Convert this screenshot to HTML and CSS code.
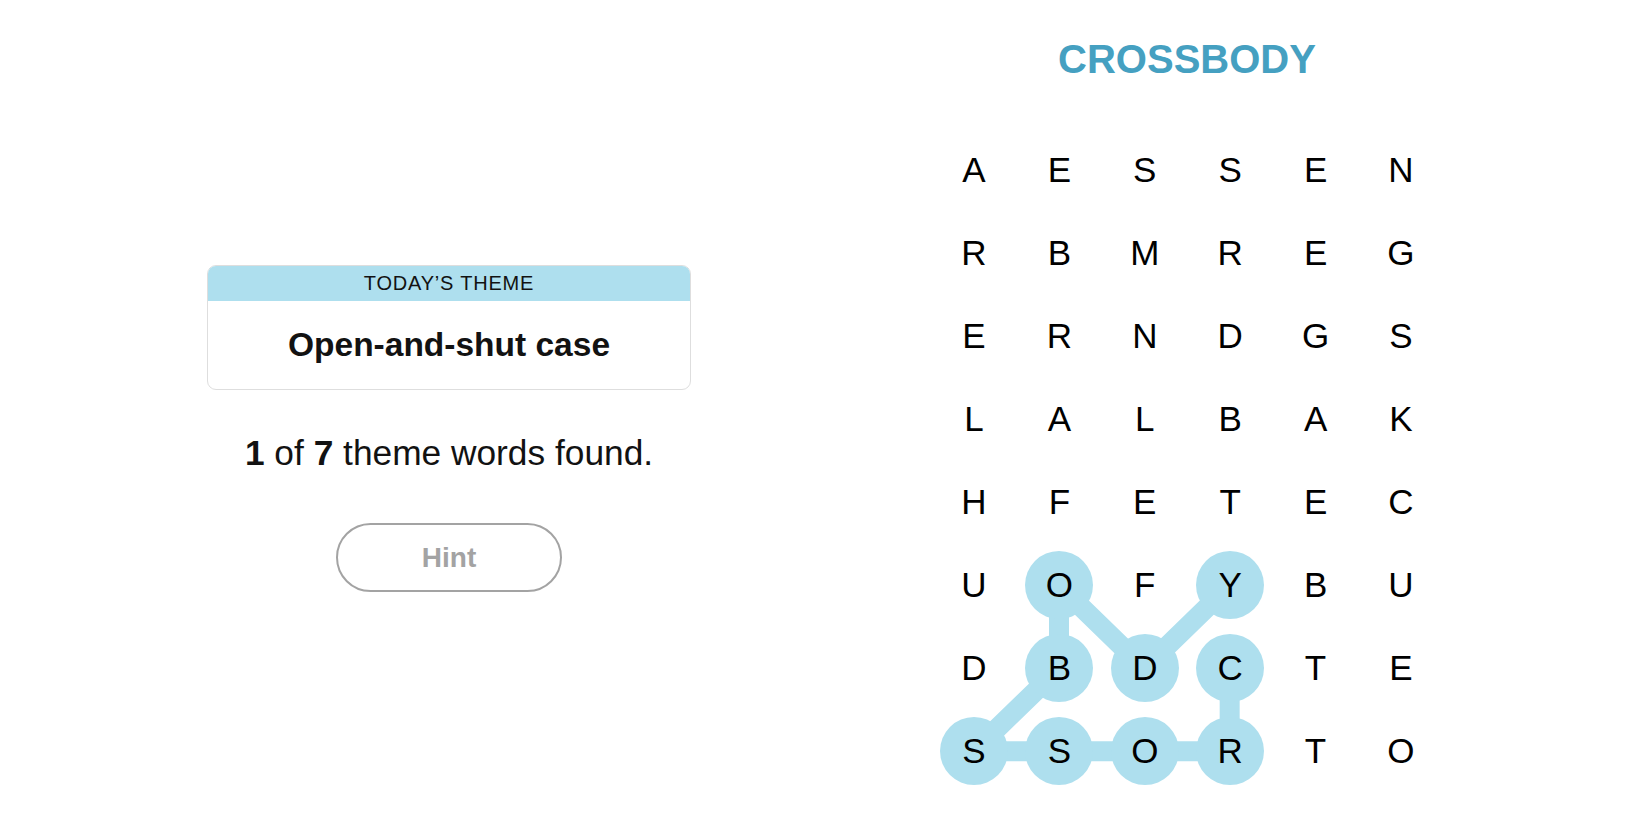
FILE: index.html
```html
<!DOCTYPE html>
<html lang="en">
<head>
<meta charset="utf-8">
<title>Strands</title>
<link rel="stylesheet" href="styles.css">
</head>
<body>
<main class="page">
  <section class="left">
    <div class="theme-card">
      <div class="theme-head">TODAY’S THEME</div>
      <div class="theme-body">Open-and-shut case</div>
    </div>
    <p class="progress"><b>1</b> of <b>7</b> theme words found.</p>
    <button class="hint" type="button">Hint</button>
  </section>
  <section class="right">
    <h1 class="word">CROSSBODY</h1>
    <div class="board">
      <svg class="links" width="512" height="664" viewBox="0 0 512.4 664" aria-hidden="true">
        <polyline points="298.9,539.5 298.9,622.5 213.5,622.5 128.1,622.5 42.7,622.5 128.1,539.5 128.1,456.5 213.5,539.5 298.9,456.5" fill="none" stroke="#aedfee" stroke-width="20" stroke-linejoin="round"/>
      </svg>
      <div class="grid">
        <span class="cell">A</span><span class="cell">E</span><span class="cell">S</span><span class="cell">S</span><span class="cell">E</span><span class="cell">N</span>
        <span class="cell">R</span><span class="cell">B</span><span class="cell">M</span><span class="cell">R</span><span class="cell">E</span><span class="cell">G</span>
        <span class="cell">E</span><span class="cell">R</span><span class="cell">N</span><span class="cell">D</span><span class="cell">G</span><span class="cell">S</span>
        <span class="cell">L</span><span class="cell">A</span><span class="cell">L</span><span class="cell">B</span><span class="cell">A</span><span class="cell">K</span>
        <span class="cell">H</span><span class="cell">F</span><span class="cell">E</span><span class="cell">T</span><span class="cell">E</span><span class="cell">C</span>
        <span class="cell">U</span><span class="cell on">O</span><span class="cell">F</span><span class="cell on">Y</span><span class="cell">B</span><span class="cell">U</span>
        <span class="cell">D</span><span class="cell on">B</span><span class="cell on">D</span><span class="cell on">C</span><span class="cell">T</span><span class="cell">E</span>
        <span class="cell on">S</span><span class="cell on">S</span><span class="cell on">O</span><span class="cell on">R</span><span class="cell">T</span><span class="cell">O</span>
      </div>
    </div>
  </section>
</main>
</body>
</html>
```

FILE: styles.css
```css
* { box-sizing: border-box; }
html, body { margin: 0; padding: 0; background: #fff; }
body {
  font-family: "Liberation Sans", Arial, sans-serif;
  color: #121212;
  width: 1650px;
  height: 825px;
  overflow: hidden;
}
.page {
  display: flex;
  align-items: flex-start;
}
.left {
  width: 898px;
  padding-top: 265px;
  display: flex;
  flex-direction: column;
  align-items: center;
}
.theme-card {
  width: 484px;
  border: 1px solid #dedede;
  border-radius: 9px;
  overflow: hidden;
}
.theme-head {
  height: 35px;
  background: #aedfee;
  display: flex;
  align-items: center;
  justify-content: center;
  font-size: 20px;
  letter-spacing: 0.8px;
  color: #121212;
}
.theme-body {
  height: 88px;
  display: flex;
  align-items: center;
  justify-content: center;
  font-size: 33.5px;
  font-weight: 700;
  color: #121212;
}
.progress {
  margin: 43px 0 0;
  font-size: 35.3px;
  line-height: 40px;
  color: #121212;
}
.progress b { font-weight: 700; }
.hint {
  margin-top: 50px;
  width: 226px;
  height: 69px;
  border: 2px solid #a3a3a3;
  border-radius: 35px;
  background: #fff;
  font-family: "Liberation Sans", Arial, sans-serif;
  font-size: 28px;
  font-weight: 700;
  color: #a3a3a3;
  padding: 0;
}
.right {
  width: 578px;
  display: flex;
  flex-direction: column;
  align-items: center;
}
.word {
  margin: 35px 0 0;
  height: 48px;
  font-size: 40px;
  line-height: 48px;
  font-weight: 700;
  color: #45a0c1;
}
.board {
  position: relative;
  margin-top: 45.5px;
  margin-left: 1px;
  width: 512.4px;
  height: 664px;
}
.links {
  position: absolute;
  left: 0;
  top: 0;
}
.grid {
  position: relative;
  z-index: 1;
  display: grid;
  grid-template-columns: repeat(6, 85.4px);
  grid-template-rows: repeat(8, 83px);
}
.cell {
  display: flex;
  align-items: center;
  justify-content: center;
  font-size: 35px;
  color: #000;
  position: relative;
}
.cell.on::before {
  content: "";
  position: absolute;
  width: 68px;
  height: 68px;
  border-radius: 50%;
  background: #aedfee;
  left: 50%;
  top: 50%;
  transform: translate(-50%, -50%);
  z-index: -1;
}
```
